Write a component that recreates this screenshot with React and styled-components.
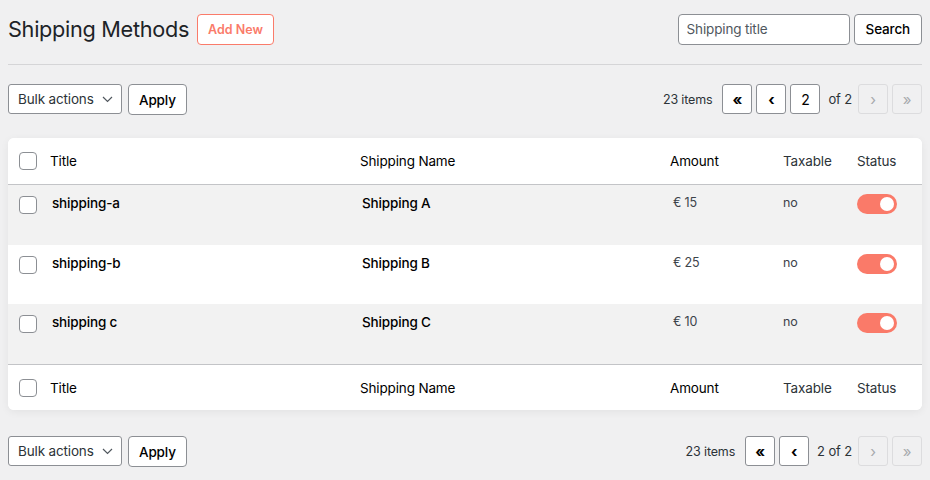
import React from 'react'
import styled, { createGlobalStyle } from 'styled-components'

const Global = createGlobalStyle`
  body {
    margin: 0;
    background: #f0f0f1;
    font-family: Inter, "Noto Sans", sans-serif;
    color: #1d2327;
    letter-spacing: -0.15px;
  }
`

const Page = styled.div`
  padding: 0 8px;
  width: 914px;
`

const Header = styled.div`
  display: flex;
  align-items: center;
  justify-content: space-between;
  height: 65px;
  padding-bottom: 6px;
  border-bottom: 1px solid #d5d5d7;
  box-sizing: border-box;
`

const TitleWrap = styled.div`
  display: flex;
  align-items: center;
  gap: 8px;
`

const PageTitle = styled.h1`
  margin: 0;
  font-size: 21.7px;
  font-weight: 400;
  color: #1d2327;
  letter-spacing: -0.3px;
`

const AddNew = styled.button`
  height: 31px;
  padding: 0 10px;
  border: 1px solid #fa7b6a;
  border-radius: 4px;
  background: #fff;
  color: #fa7b6a;
  font: 600 12.5px Inter, sans-serif;
`

const SearchBox = styled.div`
  display: flex;
  gap: 4px;
`

const Input = styled.input`
  width: 172px;
  height: 31px;
  box-sizing: border-box;
  border: 1px solid #8c8f94;
  border-radius: 4px;
  padding: 0 8px;
  font: 400 13.5px Inter, sans-serif;
  letter-spacing: -0.15px;
  color: #1d2327;
  background: #fff;
  &::placeholder { color: #50575e; }
`

const Button = styled.button`
  height: 31px;
  padding: 0 ${p => p.$px || 10}px;
  border: 1px solid #8c8f94;
  border-radius: 4px;
  background: #fff;
  color: #000;
  font: 500 13.5px Inter, sans-serif;
  letter-spacing: -0.15px;
`

const Toolbar = styled.div`
  display: flex;
  align-items: flex-start;
  justify-content: space-between;
  margin-top: ${p => p.$mt}px;
`

const Group = styled.div`
  display: flex;
  align-items: flex-start;
  gap: 6px;
`

const Select = styled.div`
  display: flex;
  align-items: center;
  justify-content: space-between;
  white-space: nowrap;
  height: 30px;
  width: 114px;
  box-sizing: border-box;
  padding: 0 8px 0 9px;
  border: 1px solid #8c8f94;
  border-radius: 3px;
  background: #fff;
  font-size: 13.5px;
  color: #2c3338;
`

const Pager = styled.div`
  display: flex;
  align-items: center;
  gap: 4px;
  font-size: 12.5px;
  color: #2c3338;
`

const Count = styled.span`
  margin-right: 6px;
`

const PageBtn = styled.div`
  width: 30px;
  height: 30px;
  box-sizing: border-box;
  display: flex;
  align-items: center;
  justify-content: center;
  border: 1px solid ${p => (p.$disabled ? '#dcdcde' : '#8c8f94')};
  border-radius: 3px;
  background: ${p => (p.$disabled ? 'transparent' : '#fff')};
  color: ${p => (p.$disabled ? '#a7aaad' : '#000')};
  font-size: 15px;
  font-weight: ${p => (p.$disabled ? 400 : 700)};
`

const PageInput = styled(PageBtn)`
  font-weight: 400;
  font-size: 14px;
`

const OfText = styled.span`
  margin: 0 2px 0 4px;
  font-size: 13px;
`

const Card = styled.div`
  margin-top: 23px;
  background: #fff;
  border-radius: 6px;
  box-shadow: 0 2px 8px rgba(0, 0, 0, 0.06);
  overflow: hidden;
`

const Row = styled.div`
  display: grid;
  grid-template-columns: 42px 310px 310px 113px 74px 1fr;
  height: ${p => p.$h}px;
  align-items: ${p => (p.$head ? 'center' : 'start')};
  background: ${p => (p.$alt ? '#f2f2f2' : '#fff')};
  border-top: ${p => (p.$top ? '1px solid #c3c4c7' : 'none')};
  border-bottom: ${p => (p.$bottom ? '1px solid #c3c4c7' : 'none')};
  box-sizing: border-box;
`

const Cell = styled.div`
  padding-top: ${p => p.$pt || 0}px;
  padding-left: ${p => p.$pl || 0}px;
  font-size: ${p => p.$size || 13.5}px;
  font-weight: ${p => p.$w || 400};
  color: ${p => p.$c || '#000'};
  line-height: 18px;
`

const Check = styled.span`
  display: block;
  margin-left: 11px;
  width: 18px;
  height: 18px;
  box-sizing: border-box;
  border: 1px solid #8c8f94;
  border-radius: 4px;
  background: #fff;
  margin-top: ${p => p.$mt || 0}px;
`

const Toggle = styled.span`
  display: block;
  width: 40px;
  height: 20px;
  border-radius: 10px;
  background: #fa7a69;
  position: relative;
  &::after {
    content: '';
    position: absolute;
    right: 3px;
    top: 3px;
    width: 14px;
    height: 14px;
    border-radius: 50%;
    background: #fff;
  }
`

const rows = [
  { title: 'shipping-a', name: 'Shipping A', amount: '€ 15', h: 60 },
  { title: 'shipping-b', name: 'Shipping B', amount: '€ 25', h: 59 },
  { title: 'shipping c', name: 'Shipping C', amount: '€ 10', h: 60 },
]

const Chevron = () => (
  <svg width="11" height="7" viewBox="0 0 11 7" fill="none">
    <path d="M1 1l4.5 4.5L10 1" stroke="#50575e" strokeWidth="1.2" />
  </svg>
)

const HeadRow = ({ top, bottom }) => (
  <Row $h={top ? 46 : 47} $head $top={top} $bottom={bottom}>
    <Check />
    <Cell>Title</Cell>
    <Cell>Shipping Name</Cell>
    <Cell>Amount</Cell>
    <Cell $c="#2c3338">Taxable</Cell>
    <Cell $c="#2c3338">Status</Cell>
  </Row>
)

const Actions = ({ mt, bottom }) => (
  <Toolbar $mt={mt}>
    <Group>
      <Select>Bulk actions <Chevron /></Select>
      <Button>Apply</Button>
    </Group>
    <Pager>
      <Count>23 items</Count>
      <PageBtn>«</PageBtn>
      <PageBtn>‹</PageBtn>
      {bottom ? (
        <OfText>2 of 2</OfText>
      ) : (
        <>
          <PageInput>2</PageInput>
          <OfText>of 2</OfText>
        </>
      )}
      <PageBtn $disabled>›</PageBtn>
      <PageBtn $disabled>»</PageBtn>
    </Pager>
  </Toolbar>
)

const App = () => (
  <Page>
    <Global />
    <Header>
      <TitleWrap>
        <PageTitle>Shipping Methods</PageTitle>
        <AddNew>Add New</AddNew>
      </TitleWrap>
      <SearchBox>
        <Input placeholder="Shipping title" />
        <Button $px={11}>Search</Button>
      </SearchBox>
    </Header>
    <Actions mt={19} />
    <Card>
      <HeadRow bottom />
      {rows.map((r, i) => (
        <Row key={r.title} $h={r.h} $alt={i % 2 === 0}>
          <Check $mt={11} />
          <Cell $pt={9} $pl={2} $w={500}>{r.title}</Cell>
          <Cell $pt={9} $pl={2} $w={500}>{r.name}</Cell>
          <Cell $pt={9} $pl={3} $size={12.5} $c="#3c434a">{r.amount}</Cell>
          <Cell $pt={9} $size={12.5} $c="#3c434a">no</Cell>
          <Cell $pt={9}><Toggle /></Cell>
        </Row>
      ))}
      <HeadRow top />
    </Card>
    <Actions mt={26} bottom />
  </Page>
)

export default App
